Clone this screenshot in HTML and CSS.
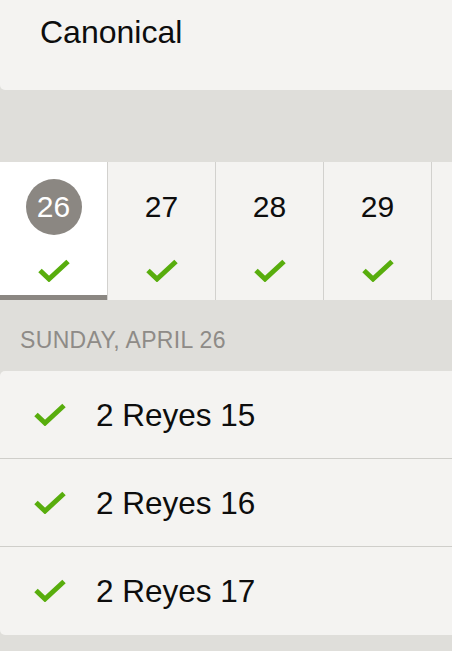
FILE: index.html
```html
<!DOCTYPE html>
<html>
<head>
<meta charset="utf-8">
<link rel="stylesheet" href="styles.css">
</head>
<body>
<div class="header">Canonical</div>
<div class="spacer"></div>
<div class="days">
  <div class="day selected">
    <div class="num"><span class="circle">26</span></div>
    <svg class="check" viewBox="0 0 32 24"><path d="M2 12.5 L11 21 L30 3.5"/></svg>
  </div>
  <div class="day">
    <div class="num">27</div>
    <svg class="check" viewBox="0 0 32 24"><path d="M2 12.5 L11 21 L30 3.5"/></svg>
  </div>
  <div class="day">
    <div class="num">28</div>
    <svg class="check" viewBox="0 0 32 24"><path d="M2 12.5 L11 21 L30 3.5"/></svg>
  </div>
  <div class="day">
    <div class="num">29</div>
    <svg class="check" viewBox="0 0 32 24"><path d="M2 12.5 L11 21 L30 3.5"/></svg>
  </div>
  <div class="day"></div>
</div>
<div class="section-label">SUNDAY, APRIL 26</div>
<div class="list">
  <div class="row">
    <svg class="check" viewBox="0 0 32 24"><path d="M2 12.5 L11 21 L30 3.5"/></svg>
    <span class="title">2 Reyes 15</span>
  </div>
  <div class="row">
    <svg class="check" viewBox="0 0 32 24"><path d="M2 12.5 L11 21 L30 3.5"/></svg>
    <span class="title">2 Reyes 16</span>
  </div>
  <div class="row">
    <svg class="check" viewBox="0 0 32 24"><path d="M2 12.5 L11 21 L30 3.5"/></svg>
    <span class="title">2 Reyes 17</span>
  </div>
</div>
</body>
</html>
```

FILE: styles.css
```css
html, body {
  margin: 0;
  padding: 0;
}
body {
  background: #dfdeda;
  font-family: "Liberation Sans", Arial, sans-serif;
  color: #0d0d0d;
  width: 452px;
  overflow: hidden;
}
.header {
  height: 90px;
  box-sizing: border-box;
  background: #f4f3f1;
  border-radius: 0 0 0 5px;
  padding: 14px 0 0 40px;
  font-size: 32px;
  line-height: 36px;
}
.spacer {
  height: 72px;
}
.days {
  display: flex;
  height: 138px;
  background: #f4f3f1;
  overflow: hidden;
}
.day {
  flex: 0 0 107px;
  border-right: 1px solid #d2d1ce;
  background: #f4f3f1;
  display: flex;
  flex-direction: column;
  align-items: center;
  position: relative;
}
.day.selected {
  background: #ffffff;
}
.day.selected::after {
  content: "";
  position: absolute;
  left: 0;
  right: 0;
  bottom: 0;
  height: 5px;
  background: #8b8782;
}
.num {
  margin-top: 17px;
  height: 56px;
  display: flex;
  align-items: center;
  justify-content: center;
  font-size: 30px;
  line-height: 56px;
}
.circle {
  width: 56px;
  height: 56px;
  border-radius: 50%;
  background: #8b8782;
  color: #ffffff;
  display: flex;
  align-items: center;
  justify-content: center;
}
.check {
  width: 32px;
  height: 24px;
  fill: none;
  stroke: #58ad0d;
  stroke-width: 5;
}
.day .check {
  margin-top: 23px;
}
.section-label {
  height: 71px;
  box-sizing: border-box;
  padding: 27px 0 0 20px;
  font-size: 23px;
  letter-spacing: 0.35px;
  line-height: 26px;
  color: #8e8b87;
}
.list {
  background: #f4f3f1;
  border-radius: 5px 0 0 5px;
}
.row {
  height: 88px;
  box-sizing: border-box;
  display: flex;
  align-items: center;
  padding-left: 34px;
  border-bottom: 1px solid #cfceca;
}
.row:last-child {
  border-bottom: none;
}
.row .check {
  margin-right: 30px;
  margin-top: -2px;
}
.title {
  font-size: 31.5px;
  line-height: 36px;
}
```
